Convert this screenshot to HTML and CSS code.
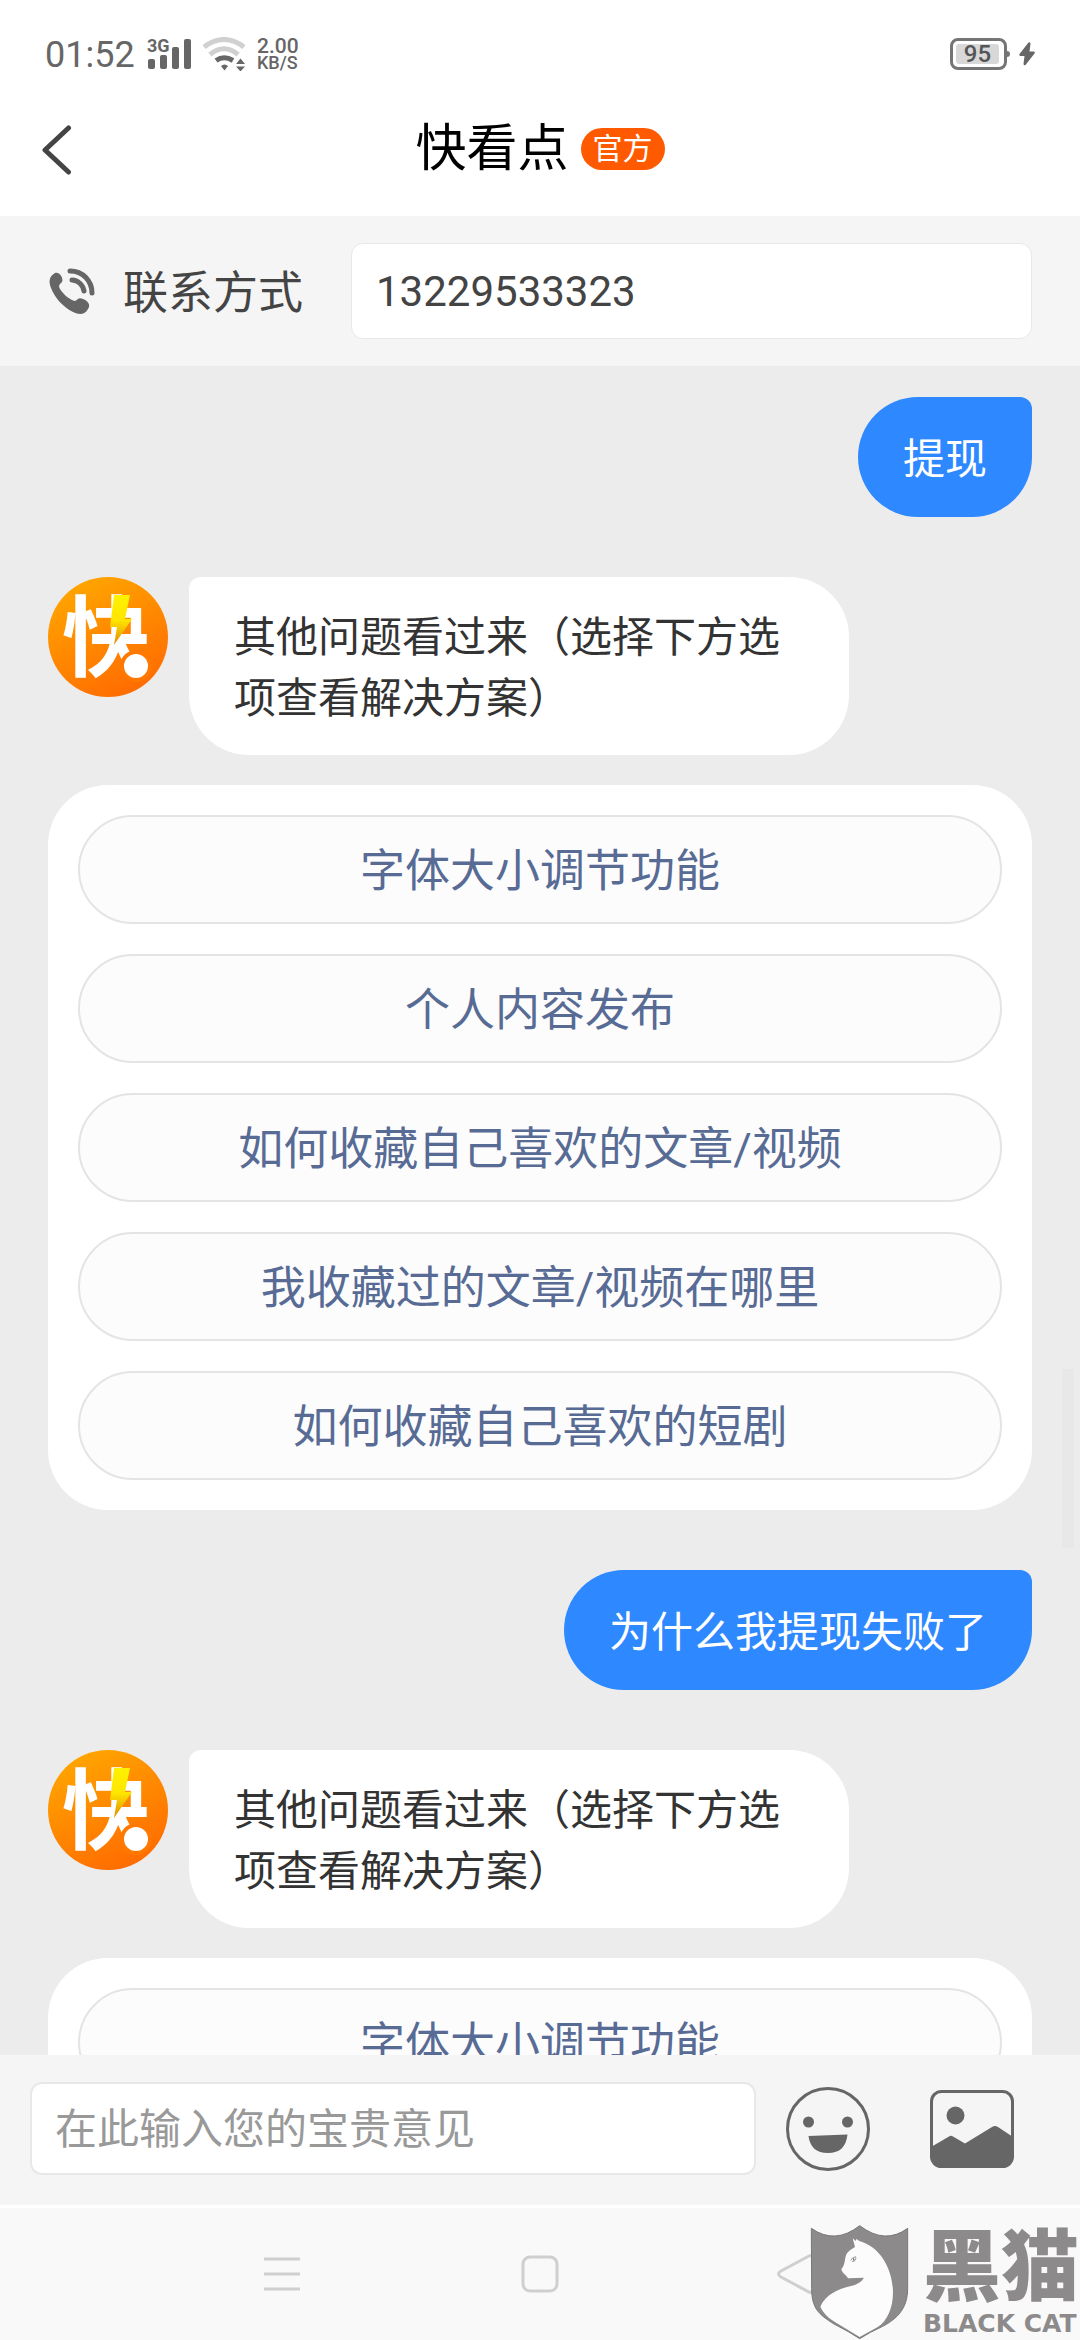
FILE: index.html
```html
<!DOCTYPE html>
<html lang="zh-CN">
<head>
    <meta charset="UTF-8">
    <meta name="viewport" content="width=device-width, initial-scale=1.0">
    <title>快看点</title>
    <link rel="stylesheet" href="styles.css">
</head>
<body>

<!-- Shared drawings -->
<svg class="defs" width="0" height="0" aria-hidden="true">
    <defs>
        <linearGradient id="orange" x1="0.2" y1="0" x2="0.7" y2="1">
            <stop offset="0" stop-color="#ffa800"/>
            <stop offset="1" stop-color="#ff6a00"/>
        </linearGradient>
        <linearGradient id="yellow" x1="0" y1="0" x2="0" y2="1">
            <stop offset="0" stop-color="#fff200"/>
            <stop offset="0.5" stop-color="#ffe600"/>
            <stop offset="1" stop-color="#e08a00"/>
        </linearGradient>
    </defs>
    <symbol id="logo" viewBox="0 0 120 120">
        <circle cx="60" cy="60" r="60" fill="url(#orange)"/>
        <text x="58" y="92" class="logo-text">快</text>
        <circle cx="88" cy="89" r="14" fill="#fff" stroke="#ff7800" stroke-width="4"/>
        <path d="M66 18H82L77 42H84L66 68L69 50H62Z" fill="url(#yellow)"/>
    </symbol>
</svg>

<div class="status-bar">
    <span class="time">01:52</span>
    <svg class="signal" viewBox="0 0 44 32">
        <text x="0" y="14" class="signal-text">3G</text>
        <rect x="1" y="21" width="7" height="10" rx="2"/>
        <rect x="13" y="17" width="7" height="14" rx="2"/>
        <rect x="25" y="9" width="7" height="22" rx="2"/>
        <rect x="37" y="1" width="7" height="30" rx="2"/>
    </svg>
    <svg class="wifi" viewBox="0 0 42 34">
        <g fill="none" stroke-width="5">
            <path d="M1 10Q21 -5 41 10" stroke="#d0d0d0"/>
            <path d="M7 17.500Q21 6 35 17.500" stroke="#d0d0d0"/>
            <path d="M13 23.500Q21 18 30 23.500" stroke="#666"/>
        </g>
        <path d="M18 29Q21.500 26 25 29L21.500 33.500Z"/>
        <path d="M33 27L37.500 21.500L42 27ZM33 29.500H42L37.500 34.500Z"/>
    </svg>
    <div class="speed">
        <span class="speed-value">2.00</span>
        <span class="speed-unit">KB/S</span>
    </div>
    <div class="battery"><span class="battery-level">95</span></div>
    <svg class="charging" viewBox="0 0 16 24"><path d="M9.500 0.500L0.500 12Q0 14 1.500 14H5.500L4.500 22Q5 24 6.500 23L15.500 11.500Q16.500 9.500 14.500 9.500H10.500L11.500 1.500Q11 -0.500 9.500 0.500Z"/></svg>
</div>

<header class="header">
    <button class="back" aria-label="返回">
        <svg viewBox="0 0 30 50"><path d="M26.500 3L3 25L26.500 47"/></svg>
    </button>
    <h1 class="title">快看点</h1>
    <span class="badge">官方</span>
</header>

<div class="contact">
    <svg class="phone" viewBox="0 0 48 48">
        <path d="M7 6C11 4 16 11 14 15C12 17 10 18 12 22C16 28 22 33 27 34C30 33 30 30 35 32C40 34 43 38 40 42C37 48 31 48 25 45C15 40 7 31 3 21C0 13 2 9 7 6Z"/>
        <g fill="none" stroke="#666" stroke-width="5" stroke-linecap="round">
            <path d="M22 4C35 4 44 14 44 26"/>
            <path d="M24 13C30 13 35 18 36 24"/>
        </g>
    </svg>
    <label class="contact-label" for="contact">联系方式</label>
    <input id="contact" class="contact-input" type="text" value="13229533323">
</div>

<main class="chat">
    <div class="message sent"><p class="bubble">提现</p></div>

    <div class="message">
        <svg class="avatar"><use href="#logo"/></svg>
        <p class="bubble">其他问题看过来（选择下方选项查看解决方案）</p>
    </div>
    <div class="options">
        <button class="option">字体大小调节功能</button>
        <button class="option">个人内容发布</button>
        <button class="option">如何收藏自己喜欢的文章/视频</button>
        <button class="option">我收藏过的文章/视频在哪里</button>
        <button class="option">如何收藏自己喜欢的短剧</button>
    </div>

    <div class="message sent"><p class="bubble">为什么我提现失败了</p></div>

    <div class="message">
        <svg class="avatar"><use href="#logo"/></svg>
        <p class="bubble">其他问题看过来（选择下方选项查看解决方案）</p>
    </div>
    <div class="options">
        <button class="option">字体大小调节功能</button>
    </div>
    <div class="scrollbar"></div>
</main>

<div class="composer">
    <input class="composer-input" type="text" placeholder="在此输入您的宝贵意见" aria-label="意见">
    <button class="tool" aria-label="表情">
        <svg viewBox="0 0 84 84">
            <circle cx="42" cy="42" r="40.500" fill="none" stroke="#666" stroke-width="3"/>
            <circle cx="22.500" cy="35" r="5.500"/>
            <circle cx="61.500" cy="35" r="5.500"/>
            <path d="M22.500 49L61.500 47.500C60 60 54 66 42 66C30 66 24 60 22.500 49Z"/>
        </svg>
    </button>
    <button class="tool" aria-label="图片">
        <svg viewBox="0 0 84 84">
            <rect x="1.500" y="4.500" width="81" height="75" rx="10" fill="none" stroke="#666" stroke-width="3"/>
            <circle cx="25.500" cy="28.500" r="9"/>
            <path d="M1 60L19 49.500Q21 48 23 49.500L35 56.500L62 40Q65 38 68 40L83 50V70Q82 81 72 81H12Q2 81 1 70Z"/>
        </svg>
    </button>
</div>

<nav class="nav">
    <button class="nav-button" aria-label="菜单">
        <svg viewBox="0 0 42 42"><path d="M3 6H39M3 21H39M3 36H39"/></svg>
    </button>
    <button class="nav-button" aria-label="主页">
        <svg viewBox="0 0 42 42"><rect x="4" y="4" width="34" height="34" rx="7"/></svg>
    </button>
    <button class="nav-button" aria-label="后退">
        <svg viewBox="0 0 42 42"><path d="M32 3L4 18Q-1 21 4 24L32 39Q38 41 38 35V7Q38 1 32 3Z"/></svg>
    </button>
</nav>

<!-- Watermark -->
<div class="watermark">
    <svg class="shield" viewBox="150 522 297 348">
        <path fill="#8d8a8b" stroke="#777" stroke-width="3" d="M154 535Q225 585 299 527Q375 585 443 535V715C443 775 412 806 368 829Q330 846 299 866Q268 845 222 822C176 793 155 775 155 715Z"/>
        <path fill="#fcfcfc" d="M278 565L287 573L289 567L298 573C360 590 397 655 399 725C399 775 382 812 352 832L299 861L226 817C200 800 190 788 181 770C196 735 232 718 270 709Q302 701 312 683Q290 683 264 685C259 674 246 670 244 657C258 642 252 622 262 608Q272 598 285 591Z"/>
        <path fill="none" stroke="#777" stroke-width="2" d="M272 632Q275 622 287 620Q290 634 276 635"/>
        <ellipse cx="281" cy="628" rx="2" ry="5" fill="#777"/>
    </svg>
    <div class="watermark-text">
        <span class="watermark-name">黑猫</span>
        <span class="watermark-latin">BLACK CAT</span>
    </div>
</div>

</body>
</html>
```

FILE: styles.css
```css
* {
    box-sizing: border-box;
}

body {
    font-family: Roboto, "Noto Sans CJK SC", sans-serif;
    margin: 0;
    height: 100vh;
    display: flex;
    flex-direction: column;
    position: relative;
    overflow: hidden;
    background-color: #fff;
    color: #444;
}

button,
input {
    font-family: inherit;
}

button {
    padding: 0;
    border: none;
    background: none;
    cursor: pointer;
}

svg {
    display: block;
    fill: #666;
}

.defs {
    position: absolute;
}

/* Status bar */
.status-bar {
    display: flex;
    align-items: center;
    height: 108px;
    padding: 0 45px;
    color: #666;
}

.time {
    font-size: 36px;
    line-height: 44px;
    width: 102px;
    padding-top: 2px;
}

.signal {
    width: 44px;
    height: 32px;
    margin-right: 12px;
    overflow: visible;
}

.signal-text {
    font-size: 18px;
    font-weight: 700;
}

.wifi {
    width: 42px;
    height: 34px;
    margin-right: 12px;
}

.speed {
    display: flex;
    flex-direction: column;
    font-weight: 500;
}

.speed-value {
    font-size: 21px;
    line-height: 18px;
}

.speed-unit {
    font-size: 18px;
    line-height: 16px;
}

.battery {
    position: relative;
    width: 57px;
    height: 32px;
    margin-left: auto;
    padding: 3px;
    border: 3px solid #757575;
    border-radius: 8px;
}

/* Battery tip */
.battery::after {
    content: "";
    position: absolute;
    left: 54px;
    top: 10px;
    width: 3px;
    height: 6px;
    border-radius: 0 3px 3px 0;
    background-color: #757575;
}

.battery-level {
    display: block;
    width: 43px;
    border-radius: 3px;
    background-color: #d8d8d8;
    color: #555;
    font-size: 24px;
    font-weight: 500;
    line-height: 20px;
    text-align: center;
}

.charging {
    width: 16px;
    height: 24px;
    margin-left: 12px;
}

/* Header */
.header {
    position: relative;
    display: flex;
    justify-content: center;
    align-items: center;
    gap: 12px;
    height: 108px;
    padding-bottom: 26px;
}

.back {
    position: absolute;
    left: 42px;
    top: 17px;
}

.back svg {
    width: 30px;
    height: 50px;
    fill: none;
    stroke: #444;
    stroke-width: 5;
    stroke-linecap: round;
    stroke-linejoin: round;
}

.title {
    margin: 0;
    font-size: 51px;
    font-weight: 400;
    line-height: 60px;
    color: #000;
}

.badge {
    padding: 0 12px;
    border-radius: 21px;
    background-color: #ff5a00;
    color: #fff;
    font-size: 30px;
    line-height: 42px;
}

/* Contact row */
.contact {
    display: flex;
    align-items: center;
    padding: 27px 48px;
    background-color: #f5f5f5;
}

.phone {
    width: 48px;
    height: 48px;
    margin-right: 27px;
}

.contact-label {
    margin-right: 48px;
    padding-bottom: 4px;
    font-size: 45px;
}

.contact-input {
    flex: 1;
    min-width: 0;
    height: 96px;
    padding: 0 24px;
    border: 1px solid #e8e8e8;
    border-radius: 12px;
    background-color: #fff;
    color: #444;
    font-size: 42px;
}

/* Chat */
.chat {
    flex: 1;
    min-height: 0;
    position: relative;
    padding: 31px 48px 0;
    background-color: #ececec;
    overflow: hidden;
}

.message {
    display: flex;
    align-items: flex-start;
    gap: 21px;
    margin-bottom: 30px;
}

.bubble {
    display: flex;
    align-items: center;
    max-width: 660px;
    min-height: 120px;
    margin: 0;
    padding: 30px 45px 26px;
    border-radius: 12px 60px 60px 60px;
    background-color: #fff;
    color: #333;
    font-size: 42px;
    line-height: 61px;
}

.sent {
    justify-content: flex-end;
    margin-bottom: 60px;
}

.sent .bubble {
    border-radius: 60px 12px 60px 60px;
    background-color: #2e88ff;
    color: #fff;
}

.avatar {
    flex: none;
    width: 120px;
    height: 120px;
}

.logo-text {
    fill: #fff;
    font-size: 88px;
    font-weight: 700;
    text-anchor: middle;
}

.options {
    display: flex;
    flex-direction: column;
    gap: 30px;
    margin-bottom: 60px;
    padding: 30px;
    border-radius: 60px;
    background-color: #fff;
}

.option {
    height: 109px;
    padding-bottom: 4px;
    border: 2px solid #e4e4e4;
    border-radius: 55px;
    background-color: #fcfcfc;
    color: #576b95;
    font-size: 45px;
}

.scrollbar {
    position: absolute;
    right: 6px;
    top: 1003px;
    width: 12px;
    height: 179px;
    background-color: #e8e8e8;
}

/* Composer */
.composer {
    display: flex;
    align-items: center;
    padding: 27px 66px 30px 30px;
    background-color: #f5f5f5;
}

.composer-input {
    flex: 1;
    min-width: 0;
    height: 93px;
    margin-right: 30px;
    padding: 2px 23px 0;
    border: 2px solid #e8e8e8;
    border-radius: 12px;
    background-color: #fff;
    font-size: 42px;
}

.composer-input::placeholder {
    color: #999;
}

.tool svg {
    width: 84px;
    height: 84px;
}

.tool + .tool {
    margin-left: 60px;
}

/* Navigation */
.nav {
    display: flex;
    justify-content: center;
    align-items: center;
    gap: 216px;
    height: 135px;
    border-top: 3px solid #fff;
    background-color: #f9f9f9;
}

.nav-button svg {
    width: 42px;
    height: 42px;
    fill: none;
    stroke: #cfcfcf;
    stroke-width: 3;
}

/* Watermark over the bottom corner */
.watermark {
    position: absolute;
    right: 0;
    bottom: 0;
    display: flex;
    align-items: flex-end;
    gap: 14px;
    color: #8d8a8b;
}

.shield {
    width: 99px;
    height: 116px;
}

.watermark-text {
    display: flex;
    flex-direction: column;
    width: 157px;
}

.watermark-name {
    font-size: 78px;
    font-weight: 900;
    line-height: 78px;
}

.watermark-latin {
    font-family: "DejaVu Sans", sans-serif;
    font-size: 25px;
    font-weight: 700;
    line-height: 32px;
    white-space: nowrap;
}
```
